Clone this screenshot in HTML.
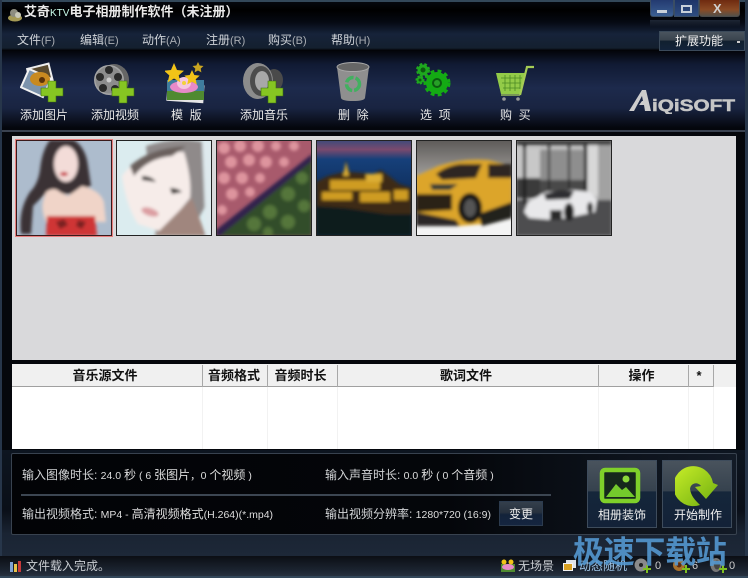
<!DOCTYPE html>
<html><head><meta charset="utf-8">
<style>
html,body{margin:0;padding:0;background:#05070c;}
#w{position:relative;width:748px;height:578px;overflow:hidden;background:#05070c;font-family:"Liberation Sans","WenQuanYi Zen Hei","Noto Sans CJK SC",sans-serif;font-size:12px;color:#e8e8e8;}
#w div,#w svg{position:absolute;}
.t{white-space:nowrap;line-height:14px;}
.m{color:#cfd3d8;top:33px;}
.m small{font-size:11px;color:#a9adb3;}
.l{color:#e6e6e6;top:108px;}
.h{color:#111;font-weight:bold;font-size:13px;top:369px;text-align:center;line-height:14px;white-space:nowrap;}
.c{top:365px;height:22px;width:1px;background:#a8a8a8;}
.d{top:387px;height:62px;width:1px;background:#f2f2f2;}
.b{color:#d2d4d6;}
.b span{font-size:10.5px;color:#ddd;}
.b i{font-style:normal;font-size:12px;}
</style></head><body><div id="w">

<div style="left:0;top:0;width:748px;height:50px;background:linear-gradient(#060a12 0,#000 10px,#050912 22px,#16233a 34px,#14202f 48px,#05070c 50px)"></div>
<div style="left:0;top:0;width:748px;height:2px;background:#33485a"></div>
<div style="left:0;top:50px;width:748px;height:81px;background:linear-gradient(#020307 0,#101a33 14px,#1d2a4c 38px,#192441 58px,#04060c 78px,#04060c 100%)"></div>
<div style="left:0;top:130px;width:748px;height:2px;background:#3a4250"></div>
<div style="left:0;top:0;width:2px;height:578px;background:#27364a"></div>
<div style="left:745px;top:0;width:3px;height:578px;background:#27364a"></div>

<!-- title -->
<svg style="left:6px;top:6px" width="18" height="18" viewBox="0 0 18 18"><ellipse cx="9" cy="12" rx="7" ry="3.500" fill="#a59a55"/><circle cx="8" cy="7" r="4" fill="#8d8d80"/><circle cx="12" cy="9" r="3" fill="#c9c9b8"/></svg>
<div class="t" style="left:24px;top:5px;font-weight:bold;font-size:13px;color:#e9e9e9">艾奇<span style="font-size:10px;font-weight:normal;color:#cfe">KTV</span>电子相册制作软件（未注册）</div>

<!-- menu -->
<div class="t m" style="left:17px">文件<small>(F)</small></div>
<div class="t m" style="left:80px">编辑<small>(E)</small></div>
<div class="t m" style="left:142px">动作<small>(A)</small></div>
<div class="t m" style="left:206px">注册<small>(R)</small></div>
<div class="t m" style="left:268px">购买<small>(B)</small></div>
<div class="t m" style="left:331px">帮助<small>(H)</small></div>

<!-- window buttons -->
<div style="left:650px;top:0;width:24px;height:17px;background:linear-gradient(#233a70,#3b5f92);border:1px solid #3a4d64;border-top:0;border-radius:0 0 3px 3px;box-sizing:border-box"></div>
<div style="left:657px;top:10px;width:10px;height:3px;background:#c8d0da"></div>
<div style="left:674px;top:0;width:25px;height:17px;background:linear-gradient(#1d3468,#2f4d80);border:1px solid #3a4d64;border-top:0;box-sizing:border-box"></div>
<div style="left:681px;top:5px;width:11px;height:8px;border:2px solid #c8d0da;box-sizing:border-box"></div>
<div style="left:699px;top:0;width:41px;height:17px;background:linear-gradient(#6f2a10,#8a4a24 60%,#54504a);border:1px solid #4a4a4a;border-top:0;border-radius:0 0 3px 3px;box-sizing:border-box"></div>
<div class="t" style="left:713px;top:2px;color:#d0d0d0;font-weight:bold;font-size:13px">X</div>
<div style="left:650px;top:20px;width:90px;height:7px;background:linear-gradient(rgba(90,110,140,.3),rgba(0,0,0,0))"></div>

<!-- ext -->
<div style="left:659px;top:31px;width:86px;height:20px;background:linear-gradient(#4a545e 0,#3a444e 45%,#11202f 50%,#12233a 100%);border:1px solid #3b4a5a;box-sizing:border-box"></div>
<div class="t" style="left:675px;top:34px;color:#f0f0f0;font-size:12px">扩展功能</div>
<div style="left:737px;top:41px;width:3px;height:2px;background:#ccc"></div>

<!-- add picture icon -->
<svg style="left:20px;top:62px" width="46" height="42" viewBox="0 0 46 42">
<rect x="8" y="3" width="24" height="20" transform="rotate(-14 20 13)" fill="#eee"/>
<rect x="10" y="5" width="20" height="15" transform="rotate(-14 20 13)" fill="#5a4a2e"/>
<rect x="3" y="10" width="26" height="22" transform="rotate(24 16 21)" fill="#f2f2f2"/>
<rect x="5" y="12" width="22" height="18" transform="rotate(24 16 21)" fill="#7c93ac"/>
<ellipse cx="20" cy="17" rx="10" ry="7" fill="#c98a20"/><circle cx="22" cy="18" r="3" fill="#5a3208"/>
<path d="M28 19h8v7h7v8h-7v6h-8v-6h-7v-8h7z" fill="#86c522" stroke="#3a6a10" stroke-width=".6"/>
</svg>
<!-- add video icon -->
<svg style="left:92px;top:62px" width="48" height="42" viewBox="0 0 48 42">
<ellipse cx="22" cy="18" rx="15" ry="16" fill="#666"/><circle cx="17" cy="18" r="15" fill="#a4a4a4"/><circle cx="17" cy="18" r="13.500" fill="#8c8c8c"/>
<circle cx="17" cy="8" r="4" fill="#2a2a2a"/><circle cx="8" cy="15" r="4" fill="#2a2a2a"/><circle cx="11" cy="26" r="4" fill="#2a2a2a"/><circle cx="23" cy="27" r="4" fill="#2a2a2a"/><circle cx="26" cy="15" r="4" fill="#2a2a2a"/><circle cx="17" cy="18" r="2.500" fill="#ccc"/>
<path d="M27 19h8v7h7v8h-7v7h-8v-7h-7v-8h7z" fill="#86c522" stroke="#3a6a10" stroke-width=".6"/>
</svg>
<!-- template icon -->
<svg style="left:165px;top:62px" width="42" height="42" viewBox="0 0 42 42">
<rect x="2" y="22" width="37" height="18" transform="rotate(4 20 30)" fill="#e6e6e6"/>
<rect x="2" y="18" width="37" height="20" fill="#3f7d9e"/><rect x="2" y="29" width="37" height="9" fill="#4f8a30"/>
<ellipse cx="19" cy="25" rx="14" ry="6" fill="#e78ac8"/><ellipse cx="19" cy="21" rx="7" ry="6" fill="#f4c6e0"/><circle cx="19" cy="21" r="2" fill="#f1d23a"/>
<path d="M9 1l3 7 7 .7-5.300 4.700 1.700 7L9 16.500 2.600 20.400l1.700-7L-1 8.700 6 8z" fill="#f2c318"/>
<path d="M27 8l2.300 5 5.400.6-4 3.600 1.100 5.300L27 19.800l-4.800 2.700 1.100-5.300-4-3.600 5.400-.6z" fill="#f2c318"/>
<path d="M33 0l1.700 3.500 3.800.5-2.800 2.600.7 3.800-3.400-1.900-3.400 1.900.7-3.800L27.500 4l3.800-.5z" fill="#c9a521"/>
</svg>
<!-- add music icon -->
<svg style="left:242px;top:62px" width="50" height="42" viewBox="0 0 50 42">
<ellipse cx="32" cy="18" rx="9" ry="11" fill="#4a4a4a"/><ellipse cx="16" cy="19" rx="15" ry="18" fill="#8c8c8c"/><ellipse cx="19" cy="19" rx="11" ry="15" fill="#4c4c4c"/><ellipse cx="20" cy="19" rx="7" ry="10" fill="#a8a8a8"/>
<path d="M26 19h8v7h7v8h-7v7h-8v-7h-7v-8h7z" fill="#86c522" stroke="#3a6a10" stroke-width=".6"/>
</svg>
<!-- trash -->
<svg style="left:335px;top:62px" width="36" height="40" viewBox="0 0 36 40">
<path d="M2 5l4 31q1 3 12 3t12-3l4-31z" fill="#8f8f8f"/><ellipse cx="18" cy="5" rx="16" ry="4.500" fill="#666" stroke="#aaa"/>
<circle cx="18" cy="22" r="6.500" fill="none" stroke="#42b060" stroke-width="3.500" stroke-dasharray="9 2"/>
</svg>
<!-- gears -->
<svg style="left:414px;top:61px" width="38" height="38" viewBox="0 0 38 38">
<circle cx="23" cy="22" r="11" fill="#14aa14" stroke="#14aa14" stroke-width="5" stroke-dasharray="3.500 3"/><circle cx="23" cy="22" r="5" fill="#0b5a10"/><circle cx="23" cy="22" r="3" fill="#27a027"/>
<circle cx="9" cy="9" r="5.500" fill="#1ea81e" stroke="#1ea81e" stroke-width="3" stroke-dasharray="2.500 2"/><circle cx="9" cy="9" r="2.500" fill="#0d5a10"/>
<circle cx="6" cy="19" r="3.500" fill="#1ea81e" stroke="#1ea81e" stroke-width="2" stroke-dasharray="2 1.500"/><circle cx="6" cy="19" r="1.500" fill="#0d5a10"/>
</svg>
<!-- cart -->
<svg style="left:495px;top:64px" width="40" height="38" viewBox="0 0 40 38">
<path d="M1 9h29l-4 21H6z" fill="#93cb48"/>
<path d="M6 14h21M7 19h19M8 24h17M10 11v16M15 11v16M20 11v16M25 11v14" stroke="#4c8a24" stroke-width=".8"/>
<path d="M25 31L32 3h7" stroke="#a5cc55" stroke-width="2.200" fill="none"/>
<path d="M6 31h19" stroke="#97b95a" stroke-width="1.500"/><circle cx="9" cy="35" r="1.800" fill="#999"/><circle cx="23" cy="35" r="1.800" fill="#999"/>
</svg>

<div class="t l" style="left:20px">添加图片</div>
<div class="t l" style="left:91px">添加视频</div>
<div class="t l" style="left:171px">模&nbsp;&nbsp;版</div>
<div class="t l" style="left:240px">添加音乐</div>
<div class="t l" style="left:338px">删&nbsp;&nbsp;除</div>
<div class="t l" style="left:420px">选&nbsp;&nbsp;项</div>
<div class="t l" style="left:500px">购&nbsp;&nbsp;买</div>

<!-- logo -->
<svg style="left:628px;top:88px" width="110" height="26" viewBox="0 0 110 26">
<path d="M1 23L14 2h4l5 21h-6l-1-6h-5l3-4h1l-1-5-8 15z" fill="#cdcdcd"/>
<text x="24" y="23" font-family="Liberation Sans,sans-serif" font-size="17" font-weight="bold" fill="#c6c6c6" stroke="#c6c6c6" stroke-width=".5" textLength="83" lengthAdjust="spacingAndGlyphs">iQiSOFT</text>
</svg>

<!-- gallery -->
<div style="left:12px;top:136px;width:724px;height:224px;background:#d9d9db"></div>
<div style="left:15px;top:139px;width:98px;height:98px;background:#e87f7f"></div>

<svg style="left:16px;top:140px" width="96" height="96" viewBox="0 0 96 96"><defs><filter id="b1" x="-10%" y="-10%" width="120%" height="120%"><feGaussianBlur stdDeviation="1.600"/></filter></defs>
<rect width="96" height="96" fill="#adbccd"/><g filter="url(#b1)">
<path d="M34 0h24q12 8 14 26l3 20-20 8-26 0-12 12-2 28H5Q2 70 14 52 22 44 24 30 26 10 34 0z" fill="#3a3336"/>
<ellipse cx="50" cy="24" rx="12" ry="18" fill="#f3dcd8"/>
<path d="M30 52q8-6 14 0l8 4 14-10q18 4 22 16l2 20H30q-6-14-2-24z" fill="#f0d4c8"/>
<path d="M31 76h48l2 20H30z" fill="#cf3434"/><path d="M40 82l8-3 4 6-8 4zM62 80l8 2-4 7-6-3z" fill="#7a2424"/>
<ellipse cx="48" cy="34" rx="4" ry="2" fill="#c72836"/></g>
<rect x=".5" y=".5" width="95" height="95" fill="none" stroke="#3a1a1a"/></svg>

<svg style="left:116px;top:140px" width="96" height="96" viewBox="0 0 96 96">
<rect width="96" height="96" fill="#dbecef"/><g filter="url(#b1)">
<path d="M30 6Q60-4 88 2l4 60-20 34H40z" fill="#8f8a8a"/>
<path d="M6 36Q24 10 68 12q8 26 6 46L46 92 22 84Q10 66 6 36z" fill="#f6ece9"/>
<path d="M14 26Q34 8 70 6L56 16Q32 18 18 36z" fill="#6a605d"/>
<path d="M26 36q10 0 14 6l-14-2zM54 48q8 0 12 4l-10 2z" fill="#38302f"/><ellipse cx="34" cy="72" rx="9" ry="4" transform="rotate(18 34 72)" fill="#dc9ea2"/>
<path d="M38 96l38-38 14 38z" fill="#a0867e"/><path d="M86 0h10v96H90z" fill="#dfeaee"/></g>
<rect x=".5" y=".5" width="95" height="95" fill="none" stroke="#222"/></svg>

<svg style="left:216px;top:140px" width="96" height="96" viewBox="0 0 96 96">
<rect width="96" height="96" fill="#a85a6c"/><g filter="url(#b1)">
<g fill="#de949e"><circle cx="8" cy="8" r="6"/><circle cx="24" cy="6" r="6"/><circle cx="42" cy="6" r="6"/><circle cx="60" cy="6" r="5"/><circle cx="78" cy="6" r="5"/><circle cx="15" cy="22" r="6"/><circle cx="33" cy="20" r="6"/><circle cx="50" cy="22" r="6"/><circle cx="68" cy="22" r="5"/><circle cx="8" cy="38" r="6"/><circle cx="26" cy="38" r="6"/><circle cx="44" cy="38" r="5"/><circle cx="16" cy="54" r="6"/><circle cx="34" cy="52" r="5"/><circle cx="6" cy="70" r="5"/></g>
<path d="M0 96V92L96 18V96z" fill="#334e2c"/>
<g fill="#55763a"><circle cx="38" cy="84" r="7"/><circle cx="54" cy="72" r="7"/><circle cx="72" cy="54" r="7"/><circle cx="86" cy="38" r="6"/><circle cx="72" cy="82" r="7"/><circle cx="88" cy="66" r="6"/><circle cx="52" cy="92" r="5"/></g>
<path d="M0 90L96 14v7L4 96H0z" fill="#32244e"/></g>
<rect x=".5" y=".5" width="95" height="95" fill="none" stroke="#222"/></svg>

<svg style="left:316px;top:140px" width="96" height="96" viewBox="0 0 96 96">
<defs><linearGradient id="s" x1="0" y1="0" x2="0" y2="1"><stop offset="0" stop-color="#3d4a7a"/><stop offset=".1" stop-color="#7a4a6e"/><stop offset=".2" stop-color="#16407a"/><stop offset=".6" stop-color="#0e2c58"/></linearGradient></defs>
<rect width="96" height="96" fill="url(#s)"/><g filter="url(#b1)">
<path d="M0 42l12-6 16-4 2-12 3 12 24 2 8-4 8 6 10 8 13 4v32H0z" fill="#3c2a12"/>
<path d="M14 40h50v10H14zM6 52h30v8H6zM44 52h30v10H44zM78 50h14v10H78z" fill="#cf9c22"/>
<path d="M30 22l3 14h-6zM50 34h16v8H50z" fill="#dcae34"/>
<path d="M0 66l30 2 40 6 26 0v22H0z" fill="#0a1a1c"/></g>
<rect x=".5" y=".5" width="95" height="95" fill="none" stroke="#222"/></svg>

<svg style="left:416px;top:140px" width="96" height="96" viewBox="0 0 96 96">
<defs><linearGradient id="g5" x1="0" y1="0" x2="0" y2="1"><stop offset="0" stop-color="#5d5a58"/><stop offset=".42" stop-color="#a8a6a3"/><stop offset=".72" stop-color="#7a7875"/><stop offset=".8" stop-color="#f4f4f4"/></linearGradient></defs>
<rect width="96" height="96" fill="url(#g5)"/><g filter="url(#b1)">
<path d="M0 36q14-6 22-10 24-8 50-6l24 6v52l-30 6-22 2L0 72z" fill="#dca52c"/>
<path d="M20 34q10-8 24-10h22l-6 14-34 2z" fill="#2e2820"/><path d="M72 24h24v14H72z" fill="#2e2820"/>
<path d="M14 44h28l-8 6H16z" fill="#2d3a36"/><path d="M0 54h36v16L0 72z" fill="#2c2416"/>
<ellipse cx="54" cy="68" rx="12" ry="15" fill="#181614"/><ellipse cx="54" cy="68" rx="6" ry="9" fill="#555"/>
<path d="M62 74l34-12v16L66 86z" fill="#23211d"/><path d="M0 72l40 8 4 6H0z" fill="#2a2825"/></g>
<rect x=".5" y=".5" width="95" height="95" fill="none" stroke="#222"/></svg>

<svg style="left:516px;top:140px" width="96" height="96" viewBox="0 0 96 96">
<rect width="96" height="96" fill="#bdbdbd"/><g filter="url(#b1)">
<rect x="22" y="10" width="48" height="30" fill="#8e8e8e"/><rect x="0" y="8" width="24" height="30" fill="#c8c8c8"/><rect x="0" y="38" width="24" height="20" fill="#3a3a3a"/><rect x="24" y="40" width="46" height="14" fill="#4a4a4a"/>
<rect x="72" y="0" width="10" height="56" fill="#d8d8d8"/><rect x="82" y="0" width="14" height="60" fill="#a2a2a2"/>
<rect x="0" y="60" width="96" height="36" fill="#4e4e50"/>
<rect x="7" y="0" width="3" height="64" fill="#1e1e1e"/><rect x="32" y="0" width="2" height="50" fill="#2a2a2a"/><rect x="52" y="0" width="2" height="50" fill="#2a2a2a"/><rect x="68" y="0" width="3" height="58" fill="#1e1e1e"/>
<rect x="0" y="0" width="96" height="5" fill="#3a3a3a"/>
<path d="M8 72l4-10 18-10 26-2 18 2 7 8-2 12-28 6-14 2-24-2z" fill="#e8e8ea"/>
<path d="M28 54l16-4 14 1-4 8-24 1z" fill="#2d2d30"/><path d="M34 70h12v10H34z" fill="#2a2a2a"/><ellipse cx="53" cy="72" rx="5" ry="9" fill="#222"/><ellipse cx="74" cy="68" rx="3" ry="6" fill="#333"/></g>
<rect x=".5" y=".5" width="95" height="95" fill="none" stroke="#222"/></svg>

<!-- table -->
<div style="left:12px;top:364px;width:724px;height:85px;background:#fff"></div>
<div style="left:12px;top:364px;width:724px;height:23px;background:#f0f0f0;border-bottom:1px solid #a0a0a0;box-sizing:border-box"></div>
<div style="left:714px;top:386px;width:22px;height:1px;background:#f0f0f0"></div>
<div class="c" style="left:202px"></div><div class="c" style="left:267px"></div><div class="c" style="left:337px"></div><div class="c" style="left:598px"></div><div class="c" style="left:688px"></div><div class="c" style="left:713px"></div>
<div class="d" style="left:202px"></div><div class="d" style="left:267px"></div><div class="d" style="left:337px"></div><div class="d" style="left:598px"></div><div class="d" style="left:688px"></div><div class="d" style="left:713px"></div>
<div class="h" style="left:10px;width:190px">音乐源文件</div>
<div class="h" style="left:202px;width:64px">音频格式</div>
<div class="h" style="left:266px;width:69px">音频时长</div>
<div class="h" style="left:336px;width:260px">歌词文件</div>
<div class="h" style="left:597px;width:89px">操作</div>
<div class="h" style="left:687px;width:24px">*</div>

<!-- bottom panel -->
<div style="left:2px;top:450px;width:743px;height:106px;background:linear-gradient(#0d1520 0,#0a0f18 60px,#1a2433 84px,#1d2838 106px)"></div>
<div style="left:11px;top:453px;width:726px;height:82px;border:1px solid #38424f;border-radius:2px;box-sizing:border-box;background:linear-gradient(90deg,#020306,#04060a 60%,#121a26)"></div>
<div style="left:21px;top:494px;width:530px;height:2px;background:#3c4652"></div>

<div class="t b" style="left:22px;top:468px">输入图像时长: <span>24.0 <i>秒</i> ( 6 <i>张图片</i>，0 <i>个视频</i> )</span></div>
<div class="t b" style="left:325px;top:468px">输入声音时长: <span>0.0 <i>秒</i> ( 0 <i>个音频</i> )</span></div>
<div class="t b" style="left:22px;top:507px">输出视频格式: <span>MP4 - <i>高清视频格式</i>(H.264)(*.mp4)</span></div>
<div class="t b" style="left:325px;top:507px">输出视频分辨率: <span>1280*720 (16:9)</span></div>

<div style="left:499px;top:501px;width:44px;height:25px;background:linear-gradient(#343f4c,#27313e 45%,#13233a 55%,#152540);border:1px solid #2c3b4e;box-sizing:border-box"></div>
<div class="t" style="left:509px;top:507px;color:#eee">变更</div>

<!-- big buttons -->
<div style="left:587px;top:460px;width:70px;height:68px;background:linear-gradient(#49535d 0,#36424e 45%,#15263a 47%,#132238 100%);border:1px solid #3e4c5c;box-sizing:border-box"></div>
<div style="left:662px;top:460px;width:70px;height:68px;background:linear-gradient(#49535d 0,#36424e 45%,#15263a 47%,#132238 100%);border:1px solid #3e4c5c;box-sizing:border-box"></div>
<svg style="left:599px;top:467px" width="42" height="37" viewBox="0 0 42 37">
<rect x="3" y="3" width="36" height="31" rx="3" fill="#16281c" stroke="#7fd02a" stroke-width="4.500"/>
<path d="M7 30l10-13 6 6 4-3 9 10z" fill="#74ca2c"/><circle cx="27" cy="12" r="3.500" fill="#8bd83a"/>
</svg>
<svg style="left:675px;top:464px" width="46" height="44" viewBox="0 0 46 44">
<defs><linearGradient id="ar" x1="0" y1="0" x2="1" y2="1"><stop offset="0" stop-color="#c8ee28"/><stop offset="1" stop-color="#6fae10"/></linearGradient></defs>
<path d="M25 41A20 20 0 1 1 38 19L43 21 31 35 20 23 26 22A6 6 0 0 0 15 25C16 32 20 36 25 41Z" fill="url(#ar)"/>
</svg>
<div class="t" style="left:598px;top:508px;color:#eee">相册装饰</div>
<div class="t" style="left:674px;top:508px;color:#eee">开始制作</div>

<!-- status -->
<div style="left:0;top:556px;width:748px;height:22px;background:linear-gradient(#0b0e14,#1a222e 60%,#2a3544)"></div>
<div style="left:0;top:576px;width:748px;height:2px;background:#33475a"></div>
<svg style="left:9px;top:559px" width="15" height="14" viewBox="0 0 15 14"><rect x="1" y="3" width="3" height="10" fill="#7ea2d4"/><rect x="5" y="5" width="3" height="8" fill="#e8c34a"/><rect x="9" y="2" width="3" height="11" fill="#c83a3a"/></svg>
<div class="t" style="left:26px;top:559px;color:#c9cdd2">文件载入完成。</div>

<svg style="left:500px;top:558px" width="16" height="15" viewBox="0 0 16 15"><rect x="1" y="6" width="14" height="8" fill="#4f8a30"/><ellipse cx="8" cy="9" rx="6" ry="3" fill="#e78ac8"/><circle cx="4" cy="4" r="2.500" fill="#f2c318"/><circle cx="11" cy="4" r="2.500" fill="#f2c318"/></svg>
<div class="t" style="left:518px;top:559px;color:#c9cdd2">无场景</div>
<svg style="left:562px;top:559px" width="15" height="13" viewBox="0 0 15 13"><rect x="4" y="1" width="10" height="8" fill="#dfe3e8"/><rect x="1" y="4" width="10" height="8" fill="#f2f2f2"/><rect x="2" y="5" width="8" height="6" fill="#d9a020"/></svg>
<div class="t" style="left:579px;top:559px;color:#9fc4e6">动态随机</div>
<svg style="left:633px;top:558px" width="18" height="16" viewBox="0 0 18 16"><circle cx="8" cy="7" r="6.500" fill="#8a8a8a"/><circle cx="8" cy="7" r="2" fill="#222"/><path d="M10 10h3v-3h2v3h3v2h-3v3h-2v-3h-3z" fill="#7fc020"/></svg>
<div class="t" style="left:655px;top:559px;font-size:11px;color:#ccc">0</div>
<svg style="left:672px;top:558px" width="18" height="16" viewBox="0 0 18 16"><circle cx="7" cy="7" r="6" fill="#a8702a"/><circle cx="7" cy="7" r="2.500" fill="#5a2a10"/><path d="M10 10h3v-3h2v3h3v2h-3v3h-2v-3h-3z" fill="#7fc020"/></svg>
<div class="t" style="left:692px;top:559px;font-size:11px;color:#ccc">6</div>
<svg style="left:709px;top:558px" width="18" height="16" viewBox="0 0 18 16"><ellipse cx="7" cy="7" rx="5.500" ry="7" fill="#777"/><ellipse cx="8" cy="7" rx="3" ry="4.500" fill="#444"/><path d="M10 10h3v-3h2v3h3v2h-3v3h-2v-3h-3z" fill="#7fc020"/></svg>
<div class="t" style="left:729px;top:559px;font-size:11px;color:#ccc">0</div>

<!-- watermark -->
<div class="t" style="left:573px;top:532px;font-family:'Noto Sans CJK SC','WenQuanYi Zen Hei',sans-serif;font-size:31px;font-weight:700;line-height:36px;color:rgba(84,152,208,.9);letter-spacing:-.3px">极速下载站</div>

</div></body></html>
